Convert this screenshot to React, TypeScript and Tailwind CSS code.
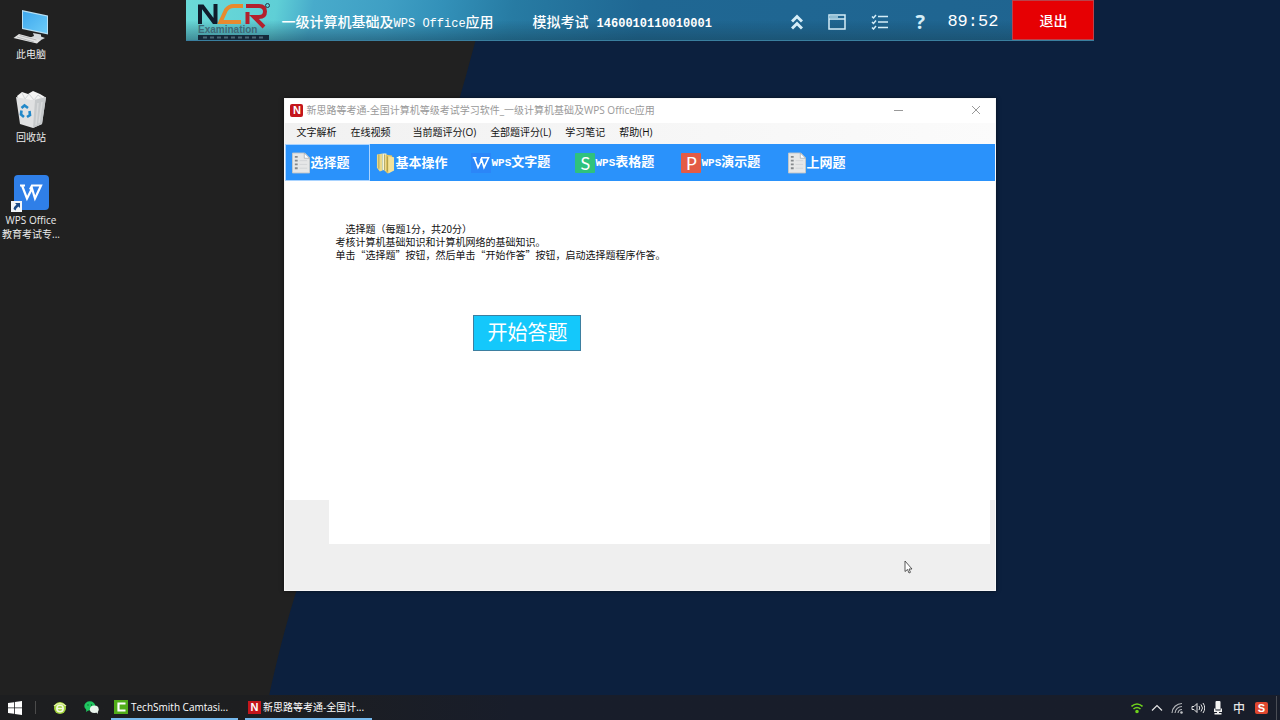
import type { ReactNode } from "react"

const sans = "font-['Open_Sans','Noto_Sans_CJK_SC',sans-serif]"
const song = "font-['Noto_Sans_CJK_SC','Liberation_Serif',serif]"
const mono = "font-['Liberation_Mono','Noto_Sans_CJK_SC',monospace]"

const ComputerIcon = () => (
  <svg viewBox="0 0 36 36" className="size-9" aria-hidden="true">
    <defs>
      <linearGradient id="screen" x1="0" y1="0" x2="1" y2="1">
        <stop offset="0" stopColor="#3ea8ee" />
        <stop offset="1" stopColor="#6ccbf7" />
      </linearGradient>
    </defs>
    <path d="M9 1 35 6.500v19L9 20z" fill="#b9dff2" />
    <path d="M10 2.500 34 7.500V24L10 19z" fill="url(#screen)" />
    <path d="m20 24 8 1.500v2l4 1.500-6 3-10-3 5-2z" fill="#d4d9dc" />
    <path d="m6 25 22 6-4 3.500L.500 29z" fill="#e3e3e3" />
    <path d="m6.500 26.500 17 4.500M4 28l17 5" stroke="#a3a8aa" strokeWidth=".7" />
  </svg>
)

const BinIcon = () => (
  <svg viewBox="0 0 36 38" className="h-[38px] w-9" aria-hidden="true">
    <path d="m4 5 5-4 6 2 5-3 7 3 5 3-3 6H7z" fill="#f4f4f4" />
    <path d="m9 2 3 6 4-5 5 6 4-5 5 4" fill="none" stroke="#cfd3d5" />
    <path d="M3 6 18 9l15-3-4 27-9 4-13-4z" fill="#e0e1e2" />
    <path d="m22 9 11-3-4 27-9 4z" fill="#c6c9cb" />
    <path d="m25 12-2 22M29 11l-3 21" stroke="#d8dadb" strokeWidth="1.500" />
    <g fill="none" stroke="#2188c9" strokeWidth="2.600">
      <path d="m8.500 17 3-2.500 3.500 2.500" />
      <path d="m16.500 20 .5 4-3 2" />
      <path d="m11 26-3-2.500.5-4" />
    </g>
  </svg>
)

const WMark = ({ className }: { className: string }) => (
  <svg viewBox="0 0 24 18" className={className} fill="none" stroke="#fff" strokeWidth="2.200" aria-hidden="true">
    <path d="M1 2h5M3 2l5 13 5-10 3 10 6-13h-9l-2 4" strokeLinejoin="miter" />
  </svg>
)

const WpsDesktopIcon = () => (
  <span className="relative flex size-[35px] items-center justify-center rounded-[4px] bg-[#2f7fe8]">
    <WMark className="h-[19px] w-6" />
    <svg viewBox="0 0 11 11" className="absolute -bottom-0.5 -left-[3px] size-[11px]" aria-hidden="true">
      <path d="M0 0h11v11H0z" fill="#f2f5f8" />
      <path d="M4 2h5v5L7.500 5.500Q5 7 4.500 9.500L2.500 8Q3 5.500 5.500 3.500z" fill="#1c4a86" />
    </svg>
  </span>
)

const NBadge = ({ className }: { className: string }) => (
  <span className={`flex shrink-0 items-center justify-center bg-[#c4161c] font-['Liberation_Sans',sans-serif] font-bold text-white ${className}`}>
    N
  </span>
)

const PageIcon = () => (
  <svg viewBox="0 0 19 22" className="h-[22px] w-[18px]" aria-hidden="true">
    <path d="M.500.500h13l5 5v16H.500z" fill="#e6e7e7" stroke="#c4c7c8" />
    <path d="M13 .500v5.500h5.500z" fill="#fff" stroke="#8d979c" strokeWidth=".6" />
    <path d="M3 4.500h3M3 8.500h3M3 12.500h3M3 16.500h3" stroke="#85898c" strokeWidth="2" />
    <path d="M8 8.500h8M8 12.500h8M8 16.500h8" stroke="#d2d5d7" />
  </svg>
)

const FolderIcon = () => (
  <svg viewBox="0 0 20 22" className="h-[22px] w-[19px]" aria-hidden="true">
    <path d="m1 2 6-1v18l-3 1-3-4z" fill="#ead98c" />
    <path d="M7 1h4v19l-4-2z" fill="#fbf5d0" />
    <path d="m10 2 7 1v16l-5 3-2-2z" fill="#e2c561" />
    <path d="m13 4 6 1v14l-6 3z" fill="#f3e39b" />
    <path d="M3 2v15M9 2v17M12 4v16" stroke="#9d9143" strokeWidth=".8" />
  </svg>
)

const AppTile = ({ letter, color }: { letter: string; color: string }) => (
  <span className={`flex size-5 items-center justify-center rounded-[1px] font-['Lato',sans-serif] text-[18px] leading-5 font-normal text-white ${color}`}>
    {letter}
  </span>
)

const NcrLogo = () => (
  <svg viewBox="0 0 84 41" className="h-[41px] w-[84px] shrink-0" role="img" aria-label="NCR Examination">
    <g fill="none" strokeWidth="4">
      <path d="M14 24V6.500h2.500L28 22h1.500V4" stroke="#101c2c" />
      <path d="M57 6H47.500Q43 6 40 10l-5.500 12H55" stroke="#e88a2e" />
      <path d="M61.500 24V12M60 6h13q6 0 6 5.500 0 5.500-6 5.500h-5l10 10" stroke="#b3202d" />
    </g>
    <circle cx="81.500" cy="5.500" r="2" fill="none" stroke="#25394a" />
    <text x="12" y="33" fontSize="10" fontWeight="700" fontFamily="Liberation Sans, sans-serif" fill="#3f6a78">
      Examination
    </text>
    <path d="M12 35h71v5H12z" fill="#15293a" />
    <path d="M17 37.500h62" stroke="#4b6877" strokeWidth="2" strokeDasharray="4 3" />
  </svg>
)

const HeaderButton = ({ label, children }: { label: string; children: ReactNode }) => (
  <button type="button" aria-label={label} className="flex items-center justify-center text-[#d5edf7]">
    {children}
  </button>
)

const ExamBar = () => (
  <header className="relative mx-auto flex h-[41px] w-[71%] min-w-[900px] items-stretch border-b border-[#3a7f9f] bg-[linear-gradient(180deg,transparent_50%,#17445a80_100%),linear-gradient(100deg,#6bdad8_0%,#5fcfd6_10%,#48abcb_14%,#3f9fc4_22%,#3391b9_28%,#277ba3_36%,#1f6793_50%,#1f6490_100%)] text-white">
    <NcrLogo />
    <div className={`ml-3 flex min-w-0 flex-1 items-center pt-1 text-[14px] font-medium whitespace-nowrap ${song}`}>
      <h1>
        一级计算机基础及<span className={`text-[12px] ${mono}`}>WPS Office</span>应用
      </h1>
      <p className="ml-[39px]">
        模拟考试<span className={`ml-2 text-[12px] font-bold ${mono}`}>1460010110010001</span>
      </p>
    </div>
    <div className="flex items-center gap-[25px] pt-1">
      <HeaderButton label="收起">
        <svg viewBox="0 0 12 16" className="h-4 w-3" fill="none" stroke="currentColor" strokeWidth="3">
          <path d="m1 7.500 5-5 5 5M1 14.500l5-5 5 5" />
        </svg>
      </HeaderButton>
      <HeaderButton label="窗口">
        <svg viewBox="0 0 18 16" className="h-4 w-[18px]" fill="none" stroke="currentColor" strokeWidth="1.500">
          <path d="M1 1h16v14H1zM1 5h16" />
          <path d="M1 3h9" stroke="#8fbcd2" strokeWidth="2.500" />
        </svg>
      </HeaderButton>
      <HeaderButton label="题目列表">
        <svg viewBox="0 0 18 16" className="h-4 w-[18px]" fill="none" stroke="currentColor" strokeWidth="1.500">
          <path d="M7 2.500h10M7 8h10M7 13.500h10" />
          <path d="m1 2.500 1.500 1.500L5 1M1 8l1.500 1.500L5 6.500M1 13.500 2.500 15 5 12" />
        </svg>
      </HeaderButton>
      <HeaderButton label="帮助">
        <span className="w-3 font-['Open_Sans',sans-serif] text-[20px] leading-4 font-bold">?</span>
      </HeaderButton>
    </div>
    <time className={`ml-[21px] flex items-center pt-1 text-[17px] ${mono}`}>89:52</time>
    <button type="button" className={`ml-3.5 w-[82px] border border-[#b9434b] bg-[#e60003] text-[14px] font-medium ${song}`}>
      退出
    </button>
  </header>
)

const shortcuts = [
  { id: "pc", icon: <ComputerIcon />, label: ["此电脑"] },
  { id: "bin", icon: <BinIcon />, label: ["回收站"] },
  { id: "wps", icon: <WpsDesktopIcon />, label: ["WPS Office", "教育考试专..."] },
]

const DesktopIcons = () => (
  <ul className={`absolute top-1.5 left-0 flex w-[62px] flex-col text-[10px] leading-[14px] text-[#ececec] ${sans}`}>
    {shortcuts.map(({ id, icon, label }) => (
      <li key={id} className="h-[83px]">
        <button type="button" className="flex w-full flex-col items-center whitespace-nowrap">
          <span className="flex h-[41px] items-center justify-center">{icon}</span>
          {label.map((line) => (
            <span key={line}>{line}</span>
          ))}
        </button>
      </li>
    ))}
  </ul>
)

const menus = [
  { label: "文字解析", className: "" },
  { label: "在线视频", className: "mr-2" },
  { label: "当前题评分(O)", className: "" },
  { label: "全部题评分(L)", className: "" },
  { label: "学习笔记", className: "" },
  { label: "帮助(H)", className: "" },
]

const tabs = [
  { latin: "", label: "选择题", icon: <PageIcon />, className: "w-[85px] border border-[#a9d3ff] pl-1.5" },
  { latin: "", label: "基本操作", icon: <FolderIcon />, className: "w-[101px] pl-1.5" },
  {
    latin: "WPS",
    label: "文字题",
    icon: (
      <span className="flex size-5 items-center justify-center bg-[#2b86f8]">
        <WMark className="h-3.5 w-[18px]" />
      </span>
    ),
    className: "w-[104px]",
  },
  { latin: "WPS", label: "表格题", icon: <AppTile letter="S" color="bg-[#2fc27d]" />, className: "w-[106px]" },
  { latin: "WPS", label: "演示题", icon: <AppTile letter="P" color="bg-[#e35b45]" />, className: "w-[107px]" },
  { latin: "", label: "上网题", icon: <PageIcon />, className: "w-20" },
]

const ExamWindow = () => (
  <main className="relative mx-auto mt-[57px] flex w-5/9 min-w-[640px] flex-col border border-[#f7f7f7] bg-white shadow-[0_0_4px_#0008]">
    <div className={`flex h-6 items-center pb-0.5 text-[10px] ${sans}`}>
      <NBadge className="ml-[5px] size-[13px] rounded-[2px] text-[11px]" />
      <h2 className="ml-[3px] text-[#999]">新思路等考通-全国计算机等级考试学习软件_一级计算机基础及WPS Office应用</h2>
      <button type="button" aria-label="最小化" className="mr-[68px] ml-auto h-px w-[9px] bg-[#999]" />
      <button type="button" aria-label="关闭" className="mr-3.5">
        <svg viewBox="0 0 10 10" className="size-2.5" fill="none" stroke="#999">
          <path d="m1 1 8 8M9 1 1 9" />
        </svg>
      </button>
    </div>
    <nav className={`flex h-[21px] items-center gap-3.5 bg-linear-to-r from-[#f1f1f1] to-[#fbfbfb] pb-0.5 pl-[11px] text-[10px] text-[#111] ${sans}`}>
      {menus.map(({ label, className }) => (
        <button key={label} type="button" className={className}>
          {label}
        </button>
      ))}
    </nav>
    <nav className={`flex h-[37px] items-stretch bg-[#2a92fb] text-[13px] font-bold text-white ${song}`}>
      {tabs.map(({ latin, label, icon, className }) => (
        <button key={label} type="button" className={`flex shrink-0 items-center whitespace-nowrap ${className}`}>
          {icon}
          <span className="pb-0.5">
            {latin && <span className={`text-[11px] ${mono}`}>{latin}</span>}
            {label}
          </span>
        </button>
      ))}
    </nav>
    <section className="min-h-[319px] pt-[41px] pl-[50px]">
      <div className={`text-[10px] leading-[13px] text-[#111] ${song}`}>
        <p className="pl-2.5">选择题（每题1分，共20分）</p>
        <p>考核计算机基础知识和计算机网络的基础知识。</p>
        <p>单击“选择题”按钮，然后单击“开始作答”按钮，启动选择题程序作答。</p>
      </div>
      <button type="button" className={`mt-[54px] ml-[138px] h-9 w-[108px] border border-[#3d7fa0] bg-[#14c8fb] pb-0.5 text-[20px] text-white ${song}`}>
        开始答题
      </button>
    </section>
    <footer className="bg-[#efefef] pr-[5px] pb-[46px] pl-11">
      <div className="h-11 bg-white" />
    </footer>
  </main>
)

const WindowsLogo = () => (
  <svg viewBox="0 0 14 14" className="size-3.5" fill="#fff" aria-hidden="true">
    <path d="M0 2 6 1.200v5.300H0zM6.800 1 14 0v6.500H6.800zM0 7.300h6v5.400L0 12zM6.800 7.300H14V14l-7.200-1z" />
  </svg>
)

const BrowserIcon = () => (
  <svg viewBox="0 0 14 14" className="size-3.5" aria-hidden="true">
    <circle cx="7" cy="7" r="6" fill="#a4d63c" />
    <path d="M1 5Q7 0 13 5" fill="none" stroke="#e2f3a0" strokeWidth="1.500" />
    <circle cx="7" cy="7.500" r="3.200" fill="none" stroke="#f4fbe2" strokeWidth="1.500" />
    <path d="M4 7.500h6" stroke="#f4fbe2" strokeWidth="1.500" />
  </svg>
)

const WechatIcon = () => (
  <svg viewBox="0 0 15 13" className="h-[13px] w-[15px]" aria-hidden="true">
    <path d="m2.500 8-.5 3 3-2z" fill="#1fc760" />
    <ellipse cx="5.800" cy="4.900" rx="5.500" ry="4.600" fill="#1fc760" />
    <ellipse cx="10.300" cy="8.300" rx="4.400" ry="3.800" fill="#e9f5ec" />
    <path d="m12 11 2 2-.3-3z" fill="#e9f5ec" />
    <g fill="#14532d">
      <circle cx="4" cy="4" r=".7" />
      <circle cx="7.500" cy="4" r=".7" />
    </g>
  </svg>
)

const CamtasiaIcon = () => (
  <svg viewBox="0 0 14 14" className="size-3.5" aria-hidden="true">
    <path d="M0 0h14v14H0z" fill="#51ad19" />
    <path d="M11.500 3.500h-7v7h7" fill="none" stroke="#fff" strokeWidth="2.200" />
  </svg>
)

const Tray = () => (
  <div className="ml-auto flex items-center gap-2 text-[#e4e4e4]">
    <svg viewBox="0 0 12 12" className="size-3" fill="none" stroke="#6fd21d" strokeWidth="1.600">
      <path d="M.500 4.500Q6-.500 11.500 4.500M2.500 7Q6 4 9.500 7" />
      <circle cx="6" cy="9.500" r="1" fill="#6fd21d" />
    </svg>
    <svg viewBox="0 0 12 12" className="size-3" fill="none" stroke="currentColor" strokeWidth="1.200">
      <path d="m1 8.500 5-5 5 5" />
    </svg>
    <svg viewBox="0 0 12 12" className="size-3" fill="none" stroke="#b4b6ba" strokeWidth="1.100">
      <path d="M1 11A10 10 0 0 1 11 1.500M4 11a7 7 0 0 1 7-6.500M7 11a4 4 0 0 1 4-3.500" />
      <circle cx="10.500" cy="10.500" r=".8" fill="#fff" />
    </svg>
    <svg viewBox="0 0 14 12" className="h-3 w-3.5" fill="none" stroke="currentColor">
      <path d="M1 4.500h2l3-3v9l-3-3H1zM8 4q1.500 2 0 4M10 2.500q3 3.500 0 7M12 1q3.500 5 0 10" />
    </svg>
    <svg viewBox="0 0 10 14" className="h-3.5 w-2.5" fill="#f2f2f2">
      <rect x="2.500" y="0" width="5" height="8.500" rx="1" />
      <path d="M1 7.500h1.500v2h5v-2H9V11H6v1h2.500v1.500h-7V12H4v-1H1z" />
    </svg>
    <span className={`w-4 text-center text-[12px] font-medium ${song}`}>中</span>
    <span className="flex h-3 w-[13px] items-center justify-center rounded-[2px] bg-[#e0472f] font-['Liberation_Sans',sans-serif] text-[11px] leading-3 font-bold text-white">
      S
    </span>
    <span className="h-6 w-px bg-[#4a4d55]" />
  </div>
)

const Taskbar = () => (
  <footer className={`relative flex h-[25px] shrink-0 items-stretch bg-linear-to-r from-[#1d1e20] from-20% to-[#181d2a] to-40% pr-[3px] text-[10px] text-white ${sans}`}>
    <button type="button" aria-label="开始" className="flex w-[30px] items-center justify-center">
      <WindowsLogo />
    </button>
    <span className="mx-[5px] my-1.5 w-px bg-[#4b4b4b]" />
    <button type="button" aria-label="浏览器" className="ml-3 flex w-3.5 items-center justify-center">
      <BrowserIcon />
    </button>
    <button type="button" aria-label="微信" className="ml-[17px] flex w-[15px] items-center justify-center">
      <WechatIcon />
    </button>
    <button type="button" className="ml-3 flex w-[127px] items-center gap-[3px] border-b-2 border-[#76b9ed] pt-px pl-[3px] whitespace-nowrap">
      <CamtasiaIcon />
      TechSmith Camtasi...
    </button>
    <button type="button" className="ml-[7px] flex w-[127px] items-center gap-0.5 border-b-2 border-[#76b9ed] pt-px pl-[3px] whitespace-nowrap">
      <NBadge className="size-[13px] text-[11px]" />
      新思路等考通-全国计...
    </button>
    <Tray />
  </footer>
)

const App = () => {
  return (
    <div lang="zh-CN" className="relative flex min-h-screen flex-col overflow-hidden bg-[#0c203e]">
      <svg viewBox="0 0 1280 720" preserveAspectRatio="none" className="absolute inset-0 size-full" aria-hidden="true">
        <path d="M0 0h486Q466 80 444 150L300 580Q280 640 264 720H0z" fill="#212121" />
      </svg>
      <div className="relative flex-1">
        <DesktopIcons />
        <ExamBar />
        <ExamWindow />
        <svg viewBox="0 0 9 14" className="absolute top-[560px] left-[904px] h-3.5 w-[9px]" aria-hidden="true">
          <path d="M1 1v10.500L3.500 9.500 5 13l1.500-.7L5 9h3z" fill="#fff" stroke="#333" strokeWidth=".8" />
        </svg>
      </div>
      <Taskbar />
    </div>
  )
}

export default App
